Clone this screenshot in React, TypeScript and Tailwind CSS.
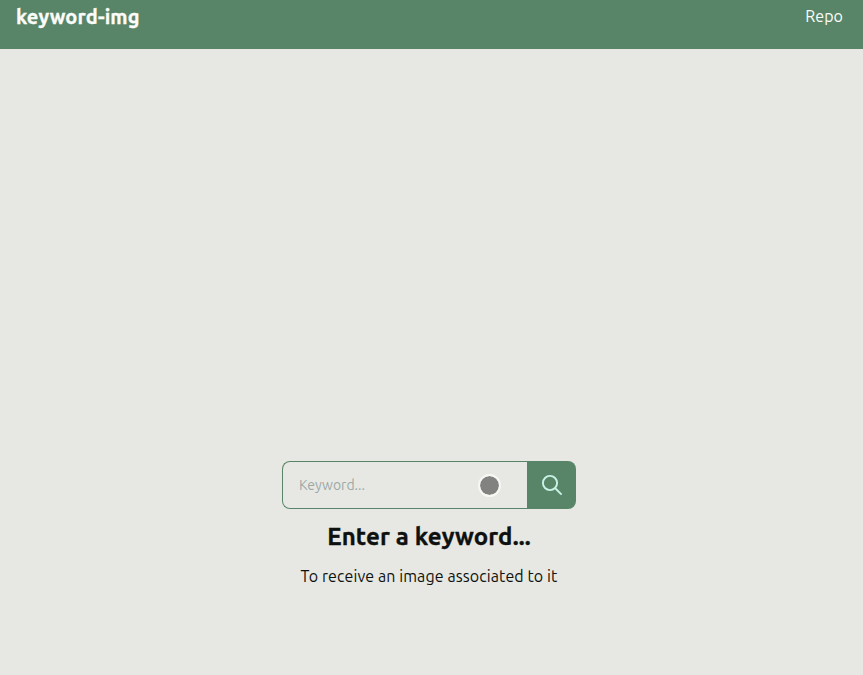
export default function App() {
  return (
    <div className="flex h-[675px] w-[863px] flex-col overflow-hidden bg-[#e7e8e3] font-['Ubuntu','Open_Sans',sans-serif] text-[#0e110f]">
      <header className="flex h-[49px] items-start justify-between bg-[#588568] pt-1 pr-5 pl-4 text-[#fbfcf9]">
        <h1 className="text-[20px] leading-[26px] font-bold tracking-[0.18px] whitespace-nowrap [-webkit-text-stroke:0.35px_currentColor]">keyword-img</h1>
        <a className="text-base leading-[25px] tracking-[0.05px]">Repo</a>
      </header>
      <main className="flex flex-1 flex-col items-center pt-[412px] pr-[5px]">
        <div className="flex h-12 w-[294px]">
          <div className="relative flex flex-1 items-center rounded-l-lg border border-r-0 border-[#588568] pl-4 text-sm text-[#9ca8a6]">
            Keyword...
            <span className="absolute top-[12px] left-[195px] size-[23px] rounded-full border-2 border-[#f7f7f4] bg-[#828280] bg-clip-padding" />
          </div>
          <button className="flex w-[49px] items-center justify-center rounded-r-lg bg-[#588568]">
            <svg width="24" height="24" viewBox="0 0 24 24" fill="none" stroke="#c9f2e6" strokeWidth="1.9">
              <circle cx="10" cy="10" r="7.1" />
              <path d="m15 15 6.6 6.6" />
            </svg>
          </button>
        </div>
        <h2 className="mt-3 text-2xl leading-8 font-bold tracking-[0.15px] whitespace-nowrap [-webkit-text-stroke:0.35px_currentColor]">Enter a keyword...</h2>
        <p className="mt-[11px] text-base leading-6 tracking-[0.09px] whitespace-nowrap">To receive an image associated to it</p>
      </main>
    </div>
  );
}
